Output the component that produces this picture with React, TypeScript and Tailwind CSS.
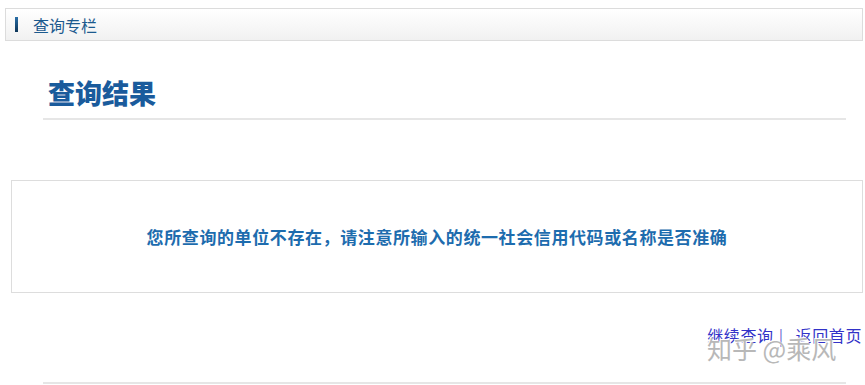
import React from "react";

export default function App() {
  return (
    <div
      className="relative w-[865px] h-[385px] overflow-hidden bg-white"
      style={{ fontFamily: '"Noto Sans CJK SC", "Noto Sans", sans-serif' }}
    >
      <div className="mt-[8px] ml-[5px] w-[858px] h-[33px] border border-[#dcdcdc] bg-gradient-to-b from-white to-[#f1f1f1] flex items-center pl-[9px]">
        <span className="w-[3px] h-[15px] bg-gradient-to-b from-[#2a6fa8] to-[#0d3558]" />
        <span className="ml-[15px] text-[16px] leading-none text-[#1c5a8e]">查询专栏</span>
      </div>

      <div className="mt-[38px] ml-[43px] w-[803px] border-b-2 border-[#e6e6e6] pb-[12px] pl-[5px]">
        <div className="text-[27px] leading-[27px] font-black text-[#1a5b9c]">查询结果</div>
      </div>

      <div className="mt-[60px] ml-[11px] w-[852px] h-[113px] border border-[#dddddd] flex items-center justify-center">
        <span className="text-[17px] font-bold text-[#1d6cae] leading-none tracking-[0.6px]">
          您所查询的单位不存在，请注意所输入的统一社会信用代码或名称是否准确
        </span>
      </div>

      <div className="mt-[32px] pr-[3px] flex justify-end text-[16px] leading-[20px] text-[#3232c8] tracking-[0.6px]">
        <span>继续查询</span>
        <span className="ml-[5px] mr-[12px] text-[#6a6ad0]">|</span>
        <span>返回首页</span>
      </div>

      <div className="mt-[37px] ml-[43px] w-[803px] h-[2px] bg-[#e6e6e6]" />

      <div className="absolute left-[707px] top-[336px] text-[25px] leading-none text-[#b8b8b8] [text-shadow:1px_1px_0_#ffffff,-1px_-1px_0_#ffffff] pointer-events-none">
        知乎 @乘风
      </div>
    </div>
  );
}
